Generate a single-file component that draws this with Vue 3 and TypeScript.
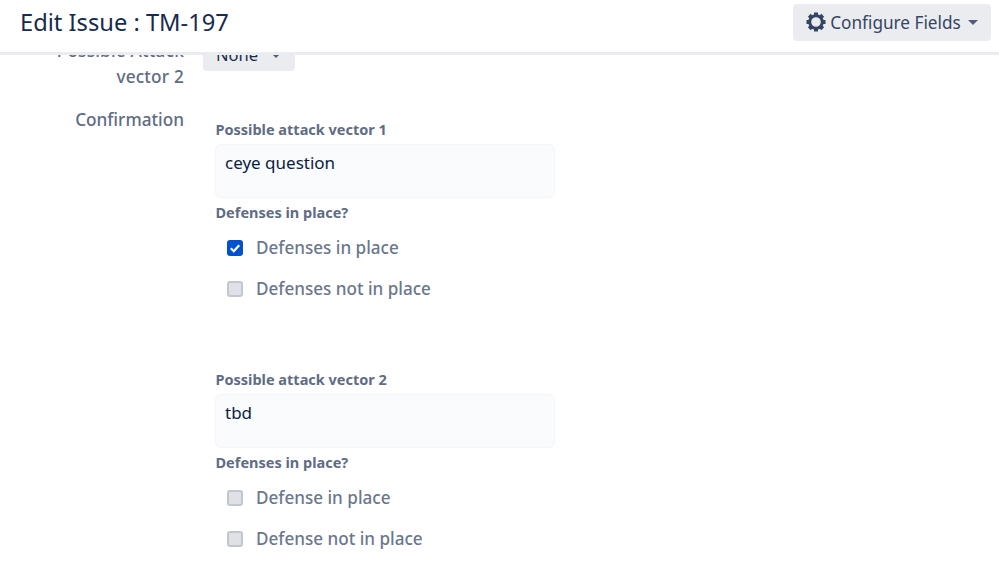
<script setup lang="ts">
interface Opt { label: string; checked: boolean }
interface Vec { title: string; value: string; opts: Opt[] }
const vectors: Vec[] = [
  { title: 'Possible attack vector 1', value: 'ceye question', opts: [
    { label: 'Defenses in place', checked: true },
    { label: 'Defenses not in place', checked: false } ] },
  { title: 'Possible attack vector 2', value: 'tbd', opts: [
    { label: 'Defense in place', checked: false },
    { label: 'Defense not in place', checked: false } ] }
]
const teeth = [0, 45, 90, 135, 180, 225, 270, 315]
</script>

<template>
  <div class="page">
    <header class="head">
      <h1>Edit Issue : TM-197</h1>
      <button class="cfg">
        <svg class="gear" viewBox="0 0 20 20" width="20" height="20">
          <circle cx="10" cy="10" r="6.300" fill="none" stroke="#344563" stroke-width="3"/>
          <rect v-for="t in teeth" :key="t" x="8" y="0.500" width="4" height="4" fill="#344563" :transform="`rotate(${t} 10 10)`"/>
        </svg>
        <span>Configure Fields</span>
        <i class="caret"></i>
      </button>
    </header>
    <main class="body">
      <div class="row first">
        <div class="lbl">Possible Attack<br>vector 2</div>
        <button class="none"><span class="none-t">None</span><i class="caret small"></i></button>
      </div>
      <div class="row">
        <div class="lbl conf">Confirmation</div>
        <div class="vectors">
          <section v-for="v in vectors" :key="v.title" class="vec">
            <div class="cap">{{ v.title }}</div>
            <div class="area">{{ v.value }}</div>
            <div class="cap">Defenses in place?</div>
            <label v-for="o in v.opts" :key="o.label" class="opt">
              <span class="box" :class="{ on: o.checked }">
                <svg v-if="o.checked" viewBox="0 0 16 16" width="16" height="16"><path d="M3.800 8.300 6.800 11.200 12.200 5.200" fill="none" stroke="#fff" stroke-width="2.200"/></svg>
              </span>
              <span>{{ o.label }}</span>
            </label>
          </section>
        </div>
      </div>
    </main>
  </div>
</template>

<style>
html, body { margin: 0; background: #fff; }
</style>

<style scoped>
.page { width: 999px; height: 582px; display: flex; flex-direction: column; overflow: hidden; font-family: "Noto Sans", sans-serif; background: #fff; }
.head { flex: none; display: flex; align-items: center; justify-content: space-between; padding: 0 8px 9px 20px; box-sizing: border-box; border-bottom: 3px solid #ebecf0; height: 55px; position: relative; z-index: 1; background: #fff; }
h1 { margin: 0; font-size: 23.7px; font-weight: 400; color: #172b4d; line-height: 32px; }
.cfg { width: 198px; height: 37px; border: 0; border-radius: 4px; background: #ebecf0; color: #344563; font: 400 17.2px "Noto Sans", sans-serif; display: flex; align-items: center; justify-content: center; gap: 4px; padding: 0; margin-top: 1px; }
.gear { flex: none; }
.caret { display: inline-block; border-top: 5px solid #505f79; border-left: 5px solid transparent; border-right: 5px solid transparent; margin-left: 3px; }
.caret.small { border-top-width: 3px; border-left-width: 3px; border-right-width: 3px; margin-left: 15px; vertical-align: middle; }
.none-t { margin-left: -3px; }
.body { flex: 1; overflow: hidden; }
.row { display: flex; align-items: flex-start; }
.first { margin-top: -17px; gap: 19px; }
.lbl { width: 184px; flex: none; text-align: right; color: #5e6c84; font-size: 17.2px; font-weight: 500; line-height: 26px; }
.first .lbl { letter-spacing: 0.2px; }
.none { width: 92px; height: 33px; margin-top: 0; border: 0; border-radius: 4px; background: #ebecf0; color: #172b4d; font: 400 16.500px "Noto Sans", sans-serif; padding: 0; }
.conf { margin-top: 17px; }
.vectors { margin-left: 31px; width: 340px; margin-top: 29px; }
.vec { height: 250px; }
.cap { color: #5e6c84; font-size: 14.500px; font-weight: 700; line-height: 20px; padding-left: 0.500px; }
.area { box-sizing: border-box; height: 54px; margin: 5px 0 4px -0.500px; width: 340px; border: 1px solid #f4f5f7; border-radius: 6px; background: #fafbfc; color: #091e42; font-size: 17px; line-height: 24px; padding: 6px 10px 5px 9.500px; }
.opt { display: flex; align-items: center; height: 41px; padding-left: 12px; gap: 13px; color: #6b778c; font-size: 17.1px; font-weight: 500; }
.opt:first-of-type { margin-top: 5px; }
.box { width: 16px; height: 16px; box-sizing: border-box; border-radius: 3px; border: 2px solid #c1c7d0; background: #dfe1e6; display: flex; flex: none; align-items: center; justify-content: center; }
.box.on { background: #0052cc; border: 0; }
</style>
